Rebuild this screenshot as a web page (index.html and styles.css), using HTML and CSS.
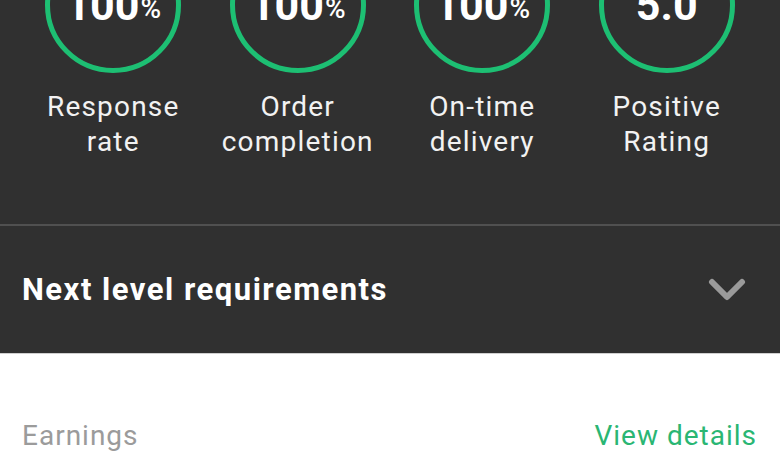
FILE: index.html
```html
<html>
  <head>
    <meta charset="UTF-8" />
    <link rel="stylesheet" href="styles.css">
  </head>
  <body>
    <div class="stats">
      <div class="stat">
        <div class="ring"><span class="num">100</span><span class="pct">%</span></div>
        <div class="label">Response<br>rate</div>
      </div>
      <div class="stat">
        <div class="ring"><span class="num">100</span><span class="pct">%</span></div>
        <div class="label">Order<br>completion</div>
      </div>
      <div class="stat">
        <div class="ring"><span class="num">100</span><span class="pct">%</span></div>
        <div class="label">On-time<br>delivery</div>
      </div>
      <div class="stat">
        <div class="ring"><span class="num">5.0</span></div>
        <div class="label">Positive<br>Rating</div>
      </div>
    </div>
    <div class="nextLevel">
      <span class="nextTitle">Next level requirements</span>
      <svg class="chevron" width="38" height="24" viewBox="0 0 38 24">
        <path d="M4 4 L19 19 L34 4" fill="none" stroke="#9a9a9a" stroke-width="6" stroke-linecap="round" stroke-linejoin="round"/>
      </svg>
    </div>
    <div class="earnings">
      <span class="earnLabel">Earnings</span>
      <span class="viewLink">View details</span>
    </div>
  </body>
</html>
```

FILE: styles.css
```css
body {
  margin: 0;
  background-color: #303030;
  font-family: Roboto, 'Noto Sans', sans-serif;
  overflow: hidden;
}
.stats {
  display: grid;
  grid-template-columns: repeat(4, 1fr);
  padding: 0 21px;
  height: 224px;
  border-bottom: 2px solid #505050;
}
.stat {
  display: flex;
  flex-direction: column;
  align-items: center;
}
.ring {
  box-sizing: border-box;
  width: 136px;
  height: 136px;
  margin-top: -63px;
  border: 5px solid #1dbf73;
  border-radius: 50%;
  display: flex;
  align-items: center;
  justify-content: center;
  color: #fff;
}
.num {
  font-size: 43px;
  font-weight: 700;
}
.pct {
  font-size: 28px;
  font-weight: 500;
  margin-top: 6px;
  margin-left: 1px;
}
.label {
  margin-top: 16px;
  font-size: 28px;
  line-height: 35px;
  letter-spacing: 1.2px;
  text-align: center;
  color: #f2f2f2;
}
.nextLevel {
  height: 127px;
  display: flex;
  align-items: center;
  justify-content: space-between;
  padding: 0 34px 0 22px;
  border-bottom: 1px solid #cfcfcf;
}
.nextTitle {
  font-size: 31px;
  font-weight: 700;
  letter-spacing: 1.5px;
  color: #fff;
}
.earnings {
  box-sizing: border-box;
  background-color: #fff;
  height: 116px;
  display: flex;
  justify-content: space-between;
  padding: 64px 23px 0 22px;
  font-size: 28px;
  line-height: 35px;
  letter-spacing: 1px;
}
.earnLabel {
  color: #9b9b9b;
}
.viewLink {
  color: #2ab673;
}
```
